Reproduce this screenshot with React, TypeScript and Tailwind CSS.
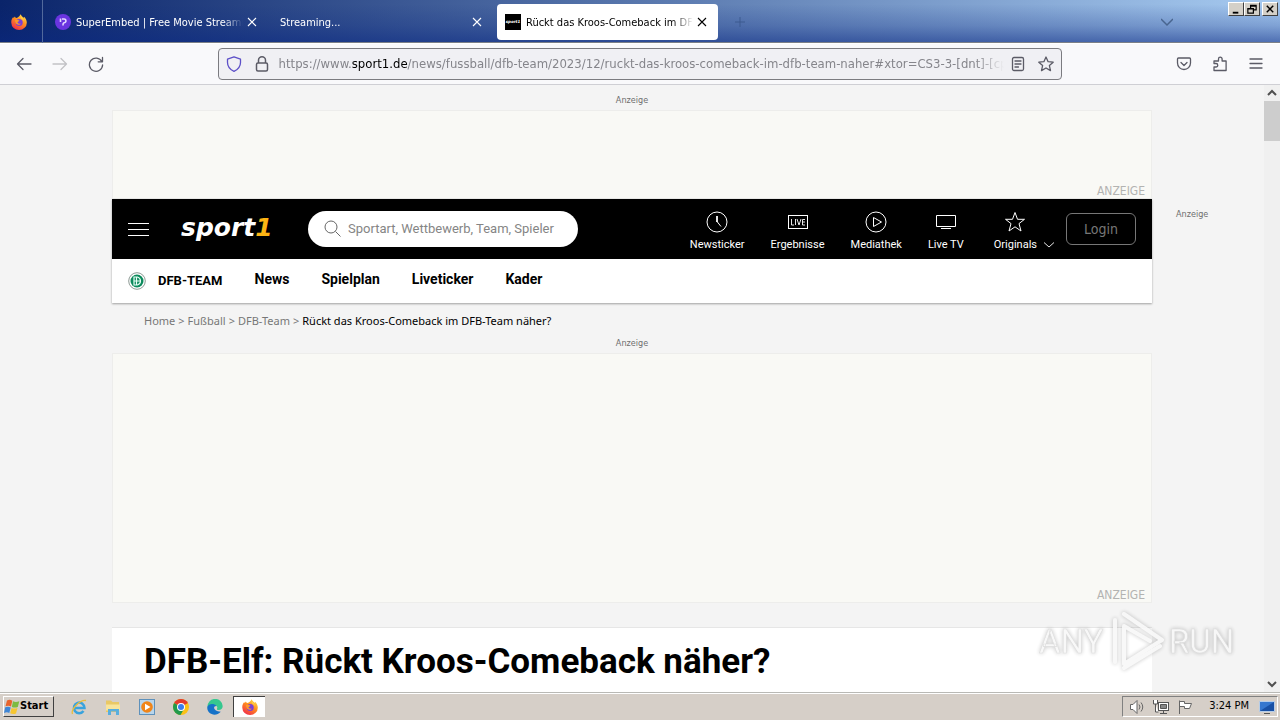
import { useState } from 'react';
import type { ReactNode } from 'react';

interface Tab {
  id: number;
  title: string;
  icon?: ReactNode;
}

const CRUMBS = ['Home', 'Fußball', 'DFB-Team'];
const SUB_NAV = ['News', 'Spielplan', 'Liveticker', 'Kader'];

function FirefoxIcon() {
  return (
    <svg className="size-4 shrink-0" viewBox="0 0 16 16">
      <defs>
        <linearGradient id="fx" x1="0.8" y1="0" x2="0.2" y2="1">
          <stop offset="0" stopColor="#ffe14a" />
          <stop offset="0.45" stopColor="#ff8a1e" />
          <stop offset="1" stopColor="#f0264f" />
        </linearGradient>
      </defs>
      <path fill="url(#fx)" d="M9.6.3c.6 1.6 2 2.3 3 3.4.5-.1.5-.6.5-.9 1.700 1.500 2.700 3.600 2.700 5.800A7.700 7.300 0 0 1 .3 8.700C.1 6.500 1 4.500 2.300 3.100c0 .4.100.8.300 1 .4-.5 1-.9 1.300-1.500.2.700.7 1.200 1.300 1.500C6.500 4.100 8.200 2.800 9.600.3z" />
      <circle cx="8.200" cy="8.600" r="3.500" fill="#7a3fd8" />
      <path fill="#ff9a28" d="M4 6.200c1.400-.8 3-.2 4.400.4-.2 1-1.500 1-1.900 1.900.6 1.200 2.100 1.500 3.500.9-1 1.900-4.200 1.800-5.300-.3-.5-1-.7-2-.7-2.900z" />
      <path fill="#ffd54a" d="M9.800 2.200c1.200 1.400 3 2.700 3.200 5.300-.6-1.200-1.500-2.300-2.700-2.900-.6-.7-.7-1.500-.5-2.400z" />
    </svg>
  );
}

function EmbedIcon() {
  return (
    <svg className="size-4 shrink-0" viewBox="0 0 16 16">
      <circle cx="8" cy="8" r="8" fill="#6a35e0" />
      <path d="M5.500 4.500v3.500M7 5h2a1.800 1.800 0 0 1 0 3.800q-1.200.5-1 2.700" fill="none" stroke="#e3d8ff" strokeWidth="1.600" />
    </svg>
  );
}

function SportIcon() {
  return (
    <span className="flex size-4 shrink-0 items-center justify-center bg-black font-['DejaVu_Sans'] text-[4px] leading-none font-bold text-white italic">
      sport1
    </span>
  );
}

function CloseIcon() {
  return (
    <svg className="size-2.5" viewBox="0 0 10 10" fill="none" stroke="currentColor" strokeWidth="1.1">
      <path d="M1 1l8 8M9 1l-8 8" />
    </svg>
  );
}

const TABS: Tab[] = [
  { id: 1, title: 'SuperEmbed | Free Movie Streaming', icon: <EmbedIcon /> },
  { id: 2, title: 'Streaming...' },
  { id: 3, title: 'Rückt das Kroos-Comeback im DFB-Team', icon: <SportIcon /> },
];

function TabBar() {
  const [active, setActive] = useState(3);
  return (
    <div className="relative flex h-11 shrink-0 items-start border-b border-white bg-[linear-gradient(to_bottom,rgba(10,40,130,0)_10%,rgba(10,40,130,0.25)_60%,rgba(10,40,130,0.55)_97%,#7c8087_98%),linear-gradient(to_right,#0a246a,#a6caf0)]">
      <div className="flex h-[43px] w-[43px] items-center justify-center border-r border-[#52699c] pr-1">
        <FirefoxIcon />
      </div>
      <div className="flex gap-1 pt-1 pl-1">
        {TABS.map(t => (
          <div key={t.id}
            className={`flex h-9 w-[221px] items-center rounded pr-[11px] pl-2 ${t.id === active ? 'bg-white text-black' : 'text-white'}`}>
            <button onClick={() => setActive(t.id)} className="flex min-w-0 flex-1 items-center gap-[5px] text-left">
              {t.icon}
              <span className="mr-1 flex-1 overflow-hidden pt-0.5 text-[11px] leading-4 whitespace-nowrap [mask-image:linear-gradient(to_right,black_88%,transparent)]">
                {t.title}
              </span>
            </button>
            <button aria-label="Close tab"><CloseIcon /></button>
          </div>
        ))}
      </div>
      <button aria-label="New tab" className="ml-4 h-11 text-[#3c5a90]">
        <svg className="size-3" viewBox="0 0 12 12" stroke="currentColor"><path d="M6 1v10M1 6h10" /></svg>
      </button>
      <button aria-label="List all tabs" className="mr-[59px] ml-auto flex h-11 items-center px-12 text-[#49658f]">
        <svg className="size-3" viewBox="0 0 12 12" fill="none" stroke="currentColor" strokeWidth="1.500"><path d="M0 3l6 6 6-6" /></svg>
      </button>
      <div className="absolute top-0.5 right-0.5 flex">
        <WinButton label="Minimize"><path d="M3 10h6" strokeWidth="2" /></WinButton>
        <WinButton label="Restore"><path d="M5 5V2h6v5H8M5 3h6M2 5.500h6v5H2zM2 6h6" /></WinButton>
        <span className="w-0.5" />
        <WinButton label="Close"><path d="M3 2.500l7 7M10 2.500l-7 7" strokeWidth="1.600" /></WinButton>
      </div>
    </div>
  );
}

function WinButton({ label, children }: { label: string; children: ReactNode }) {
  return (
    <button aria-label={label}
      className="flex h-3.5 w-4 items-center justify-center border-t border-r border-b border-l border-t-white border-r-[#404040] border-b-[#404040] border-l-white bg-[#d4d0c8] text-black">
      <svg className="size-3" viewBox="0 0 13 12" fill="none" stroke="currentColor" strokeWidth="1.300">{children}</svg>
    </button>
  );
}

function ToolIcon({ label, children, dim }: { label: string; children: ReactNode; dim?: boolean }) {
  return (
    <button aria-label={label} className={`shrink-0 ${dim ? 'text-[#c2c2c6]' : 'text-[#5b5b66]'}`}>
      <svg className="size-4" viewBox="0 0 16 16" fill="none" stroke="currentColor" strokeWidth="1.300" strokeLinecap="round" strokeLinejoin="round">
        {children}
      </svg>
    </button>
  );
}

function Toolbar() {
  return (
    <div className="flex h-[41px] shrink-0 items-center border-b border-[#cfcfd4] bg-[#f9f9fb]">
      <div className="flex flex-1 gap-5 pl-4">
        <ToolIcon label="Back"><path d="M15 8H1.500M7 2.500L1.500 8 7 13.500" /></ToolIcon>
        <ToolIcon label="Forward" dim><path d="M1 8h13.500M9 2.500L14.500 8 9 13.500" /></ToolIcon>
        <ToolIcon label="Reload"><path d="M13.800 5.500A6.600 6.600 0 1 0 14.600 9M14.500 1.500v4.300h-4.300" /></ToolIcon>
      </div>
      <div className="flex h-8 w-[66%] items-center rounded border border-[#7b7b80] bg-[#f0f0f4] px-[7px]">
        <svg className="mr-3 size-4 shrink-0 text-[#5d50c8]" viewBox="0 0 16 16" fill="none" stroke="currentColor" strokeWidth="1.300" strokeLinejoin="round">
          <path d="M8 .8l6.500 2.400v3.300c0 4-2.500 7-6.500 8.800C4 13.500 1.500 10.500 1.500 6.500V3.200z" />
        </svg>
        <svg className="mr-[9px] size-4 shrink-0 text-[#5b5b66]" viewBox="0 0 16 16" fill="none" stroke="currentColor" strokeWidth="1.500">
          <rect x="2.500" y="7" width="11" height="8" rx="1.500" />
          <path d="M4.500 7V4.300a3.500 3.500 0 0 1 7 0V7" />
        </svg>
        <div className="min-w-0 flex-1 overflow-hidden font-['DejaVu_Sans_Condensed','DejaVu_Sans',sans-serif] text-[13px] leading-5 whitespace-nowrap text-[#85858b] [mask-image:linear-gradient(to_right,black_96%,transparent)]">
          https://www.<span className="text-black">sport1.de</span>/news/fussball/dfb-team/2023/12/ruckt-das-kroos-comeback-im-dfb-team-naher#xtor=CS3-3-[dnt]-[cpc]
        </div>
        <div className="flex gap-3 pl-1.5">
          <ToolIcon label="Reader view"><rect x="2.500" y="1.500" width="11" height="13" rx="1.500" /><path d="M5 5h6M5 8h6M5 11h3.500" /></ToolIcon>
          <ToolIcon label="Bookmark"><path d="M8 1l2.100 4.700 5.100.5-3.800 3.400 1.100 5L8 12l-4.500 2.600 1.100-5L.8 6.200l5.100-.5z" /></ToolIcon>
        </div>
      </div>
      <div className="flex flex-1 justify-end gap-5 pr-4">
        <ToolIcon label="Pocket"><path d="M2.500 2h11c.6 0 1 .4 1 1v4a6.500 6.500 0 0 1-13 0V3c0-.6.4-1 1-1zM5 6.500l3 3 3-3" /></ToolIcon>
        <ToolIcon label="Extensions"><path d="M2 14.500v-3.500h2a1.500 1.500 0 0 0 0-3.500H2V5h4.500V3a1.800 1.800 0 0 1 3.600 0v2h4v9.500z" /></ToolIcon>
        <ToolIcon label="Menu"><path d="M2 3h12M2 7.500h12M2 12h12" /></ToolIcon>
      </div>
    </div>
  );
}

function AdSlot({ className }: { className: string }) {
  return (
    <div>
      <p className="text-center font-['DejaVu_Sans_Condensed','DejaVu_Sans',sans-serif] text-[9px] leading-5 text-[#6e6e6e]">Anzeige</p>
      <div className={`flex items-end justify-end border border-[#ededeb] bg-[#f9f9f5] pr-1.5 ${className}`}>
        <span className="font-['DejaVu_Sans_Condensed','DejaVu_Sans',sans-serif] text-[12px] leading-3.5 text-[#b3b3b1]">ANZEIGE</span>
      </div>
    </div>
  );
}

function NavItem({ label, children }: { label: string; children: ReactNode }) {
  return (
    <a href="#" className="flex flex-col items-center gap-1.5 whitespace-nowrap">
      <svg className="size-[22px]" viewBox="0 0 22 22" fill="none" stroke="currentColor" strokeWidth="1">{children}</svg>
      <span className="text-[11px] leading-3">{label}</span>
    </a>
  );
}

function SiteHeader() {
  return (
    <header className="shadow-[0_1px_2px_rgba(0,0,0,0.35)]">
      <div className="flex h-[60px] items-center bg-black px-4 text-white">
        <button aria-label="Menü" className="flex w-[21px] flex-col gap-[5px]">
          <span className="h-px w-full bg-white" />
          <span className="h-px w-full bg-white" />
          <span className="h-px w-full bg-white" />
        </button>
        <a href="#" className="ml-8 w-[93px] pb-0.5 font-['DejaVu_Sans'] text-[25px] leading-7 font-bold italic">
          sport<span className="text-[#fdb514]">1</span>
        </a>
        <label className="ml-[34px] flex h-9 w-[270px] shrink-0 items-center gap-1.5 rounded-full bg-white pr-4 pl-4">
          <svg className="size-[18px] shrink-0 text-[#555]" viewBox="0 0 18 18" fill="none" stroke="currentColor" strokeWidth="0.900">
            <circle cx="7" cy="7" r="6" /><path d="M11.500 11.500l5 5" />
          </svg>
          <input aria-label="Suche" placeholder="Sportart, Wettbewerb, Team, Spieler"
            className="min-w-0 flex-1 bg-transparent text-[13px] text-black outline-none placeholder:text-[#858585]" />
        </label>
        <nav className="ml-auto flex gap-[26px] pt-1">
          <NavItem label="Newsticker"><circle cx="11" cy="11" r="10" /><path d="M11 5v6" strokeWidth="1.800" /><path d="M11 10.500l4 5" /></NavItem>
          <NavItem label="Ergebnisse">
            <rect x="1.500" y="4.500" width="19" height="13" />
            <path d="M4.500 8v6h2.500M8.500 8v6M10 8l2 6 2-6M18 8.500h-2.500v5.500H18M15.500 11H18" strokeWidth="0.900" />
          </NavItem>
          <NavItem label="Mediathek"><circle cx="11" cy="11" r="10" /><path d="M8.500 6.500v9l8-4.500z" /></NavItem>
          <NavItem label="Live TV"><path d="M1.500 4.500h19v11h-19zM6 17.500h10" /></NavItem>
          <div className="ml-1 flex items-end gap-1.5">
            <NavItem label="Originals"><path d="M11 1.500l2.500 6.800h7L15 12.600l2 7.400-6-4.200L5 20l2-7.400L1.500 8.300h7z" /></NavItem>
            <svg className="size-3" viewBox="0 0 12 12" fill="none" stroke="currentColor" strokeWidth="0.900"><path d="M1 3.500L6 8l5-4.500" /></svg>
          </div>
        </nav>
        <button className="ml-[11px] h-8 w-[70px] rounded-md border border-[#777] font-['DejaVu_Sans_Condensed','DejaVu_Sans',sans-serif] text-sm text-[#777]">Login</button>
      </div>
      <nav className="flex h-11 items-center gap-8 bg-white px-4 text-[13px] font-bold text-black">
        <a href="#" className="flex items-center gap-3">
          <svg className="size-[18px]" viewBox="0 0 18 18">
            <circle cx="9" cy="9" r="8.300" fill="#fff" stroke="#8d9a94" />
            <circle cx="9" cy="9" r="6.500" fill="#0c8a5c" />
            <path d="M6 5h3.500q3 1 3 4t-3 4H6zM6 9h6M8.500 5v8" stroke="#e8fff6" fill="none" strokeWidth="1.200" />
          </svg>
          DFB-TEAM
        </a>
        {SUB_NAV.map(n => <a key={n} href="#" className="pb-1 text-sm">{n}</a>)}
      </nav>
    </header>
  );
}

function Watermark() {
  return (
    <svg className="pointer-events-none absolute right-9 bottom-4 h-[72px] w-52 opacity-90 drop-shadow-[0_0_2px_rgba(0,0,0,0.25)]" viewBox="0 0 208 72" fill="none">
      <g fill="#f8f8f8" stroke="#dadada" strokeWidth="0.600" fontFamily="Roboto, sans-serif" fontSize="33">
        <text x="3" y="49">ANY</text>
        <text x="133" y="49">RUN</text>
      </g>
      <g strokeLinejoin="round" strokeLinecap="round" stroke="#f8f8f8" strokeWidth="4">
        <path d="M88 10l38 26-38 24V22l26 15" />
        <path d="M79 16v42M88 64l36-22" />
      </g>
    </svg>
  );
}

function Page() {
  return (
    <div className="relative flex min-h-0 flex-1 bg-[#f4f4f4]">
      <div className="flex flex-1 items-start overflow-hidden">
        <div className="flex-1" />
        <main className="w-full max-w-[1040px] shrink-0 pt-[5px]">
          <AdSlot className="h-[89px]" />
          <SiteHeader />
          <nav className="flex items-center gap-[3px] px-8 pt-2.5 pb-1 font-['Noto_Sans',sans-serif] text-[11px] leading-4 text-[#777]">
            {CRUMBS.map(c => (
              <span key={c} className="flex gap-[3px]"><a href="#">{c}</a><span>&gt;</span></span>
            ))}
            <span className="text-black">Rückt das Kroos-Comeback im DFB-Team näher?</span>
          </nav>
          <AdSlot className="h-[250px]" />
          <article className="mt-6 border-t border-[#e6e6e6] bg-white px-8 pt-3 pb-10">
            <h1 className="text-[35px] leading-[44px] font-bold text-black">DFB-Elf: Rückt Kroos-Comeback näher?</h1>
          </article>
        </main>
        <div className="flex-1">
          <p className="mt-[119px] ml-6 font-['DejaVu_Sans_Condensed','DejaVu_Sans',sans-serif] text-[9px] leading-5 text-[#6e6e6e]">Anzeige</p>
        </div>
      </div>
      <div className="flex w-4 flex-col items-center bg-[#f0f0f0] text-[#505050]">
        <svg className="my-0.5 h-3 w-2.5" viewBox="0 0 10 12" fill="none" stroke="currentColor" strokeWidth="2"><path d="M1 8l4-4 4 4" /></svg>
        <div className="h-10 w-full bg-[#cdcdcd]" />
        <svg className="mt-auto mb-0.5 h-3 w-2.5" viewBox="0 0 10 12" fill="none" stroke="currentColor" strokeWidth="2"><path d="M1 4l4 4 4-4" /></svg>
      </div>
      <Watermark />
    </div>
  );
}

function LaunchButton({ label, children }: { label: string; children: ReactNode }) {
  return (
    <button aria-label={label} className="flex w-[34px] items-center justify-center">
      <svg className="size-4" viewBox="0 0 16 16">{children}</svg>
    </button>
  );
}

function Taskbar() {
  return (
    <footer className="flex h-7 shrink-0 border-t border-[#b9b9b5] bg-[#d6cfc8] py-[3px] pr-0.5 pl-[3px] text-black shadow-[inset_0_1px_0_#fff]">
      <button className="flex w-[51px] items-center border-t border-r border-b border-l border-t-white border-r-[#404040] border-b-[#404040] border-l-white text-[11px] font-bold">
        <svg className="size-4 shrink-0" viewBox="0 0 16 16">
          <path fill="#e8642c" d="M3 1.500C5 .5 6.500.5 8.300 1.800L7 7.500C5.300 6.500 3.500 6.500 1.500 7.300z" />
          <path fill="#7dbb42" d="M9 2.300c1.800.9 3.800.9 6.300 0L13.800 8c-2 .8-4 .8-6 0z" />
          <path fill="#3f86d6" d="M1.200 8.300c2-.8 3.800-.8 5.500.2L5.300 14c-1.600-1-3.300-1-5.300 0z" />
          <path fill="#f6c631" d="M7.600 8.900c1.700.9 3.600.9 5.900 0L12 14.500c-2 .9-4 .8-5.800-.2z" />
        </svg>
        Start
      </button>
      <div className="ml-2 flex">
        <LaunchButton label="Internet Explorer">
          <path d="M3 9h10.500A5.300 5.300 0 1 0 12.500 12" fill="none" stroke="#39a3dd" strokeWidth="2.500" />
          <path d="M1.500 15C-.5 10.500 9 .5 15 1.500" fill="none" stroke="#e9bd3c" strokeWidth="1.300" />
        </LaunchButton>
        <LaunchButton label="Explorer">
          <path d="M1 1.500h5l1.500 1.500H14v10H1z" fill="#e9c865" />
          <path d="M1 5.500h14v6H1z" fill="#f8e49b" />
          <path d="M3 16v-6h11v6h-3v-3.500H6V16z" fill="#58aede" />
        </LaunchButton>
        <LaunchButton label="Media Player">
          <rect x="0.500" y="0.500" width="15" height="15" fill="#b8d5eb" stroke="#5e91bb" />
          <circle cx="8" cy="8" r="5.800" fill="#f08519" />
          <path d="M6 4.700v6.600L11.500 8z" fill="#fff" />
        </LaunchButton>
        <LaunchButton label="Chrome">
          <circle cx="8" cy="8" r="8" fill="#fbc116" />
          <path d="M8 8L1.100 4A8 8 0 0 1 14.900 4z" fill="#e33b2e" />
          <path d="M8 8L1.100 4A8 8 0 0 0 7.500 16l3.500-6z" fill="#229a4c" />
          <circle cx="8" cy="8" r="4" fill="#fff" /><circle cx="8" cy="8" r="3" fill="#3b7ded" />
        </LaunchButton>
        <LaunchButton label="Edge">
          <path d="M.5 8A7.600 7.600 0 0 1 15.700 7c0 3-2.200 4.300-4.500 4-1.200-.2-1.600-1-.9-2C10.800 6.200 5 4.500.5 8z" fill="#36c78f" />
          <path d="M.3 8C1.500 4.500 7 4 9.500 7 6 6.500 5.500 12 13.800 12.800 8.500 18.500-.5 15 .3 8z" fill="#1672c8" />
        </LaunchButton>
        <button aria-label="Firefox" className="ml-px flex w-8 items-center justify-center border-t border-l border-t-[#404040] border-l-[#404040] bg-white">
          <FirefoxIcon />
        </button>
      </div>
      <div className="ml-auto flex items-center border-t border-r border-b border-l border-t-[#808080] border-r-white border-b-white border-l-[#808080] pr-0.5 pl-1.5">
        <svg className="mr-2 size-4" viewBox="0 0 16 16" fill="#fff" stroke="#666">
          <path d="M1.500 5.500h2.500l4-4v13l-4-4H1.500z" /><path d="M10 5.500q2 2.500 0 5M12 3.500q3.500 4.500 0 9" fill="none" />
        </svg>
        <svg className="mr-2 size-4" viewBox="0 0 16 16" fill="#fff" stroke="#555">
          <rect x="5.500" y="3.500" width="10" height="8" /><path fill="#888" d="M7.500 5.500h6v4h-6z" /><path d="M7 14.500h7M10.500 12v2M.5 1v4h4V1M2.500 5v8h3" />
        </svg>
        <svg className="mr-4 size-4" viewBox="0 0 16 16" fill="#fff" stroke="#666">
          <path d="M2.500 15V1.500M2.500 2.500h5v2h7l-2 5h-5v-2h-5z" />
        </svg>
        <span className="text-[11px]">3:24 PM</span>
        <svg className="ml-2.5 size-4" viewBox="0 0 16 16">
          <path fill="#3577cf" stroke="#b6cde8" d="M.5 2.500h15v10H.5z" /><path d="M1 12l14-9v9z" fill="#1850a5" /><path d="M5 14.500h6" stroke="#555" />
        </svg>
      </div>
    </footer>
  );
}

export default function App() {
  return (
    <div className="flex h-screen flex-col overflow-hidden font-['DejaVu_Sans_Condensed','DejaVu_Sans',sans-serif]">
      <TabBar />
      <Toolbar />
      <div className="flex min-h-0 flex-1 flex-col font-[Roboto,sans-serif]">
        <Page />
      </div>
      <Taskbar />
    </div>
  );
}
